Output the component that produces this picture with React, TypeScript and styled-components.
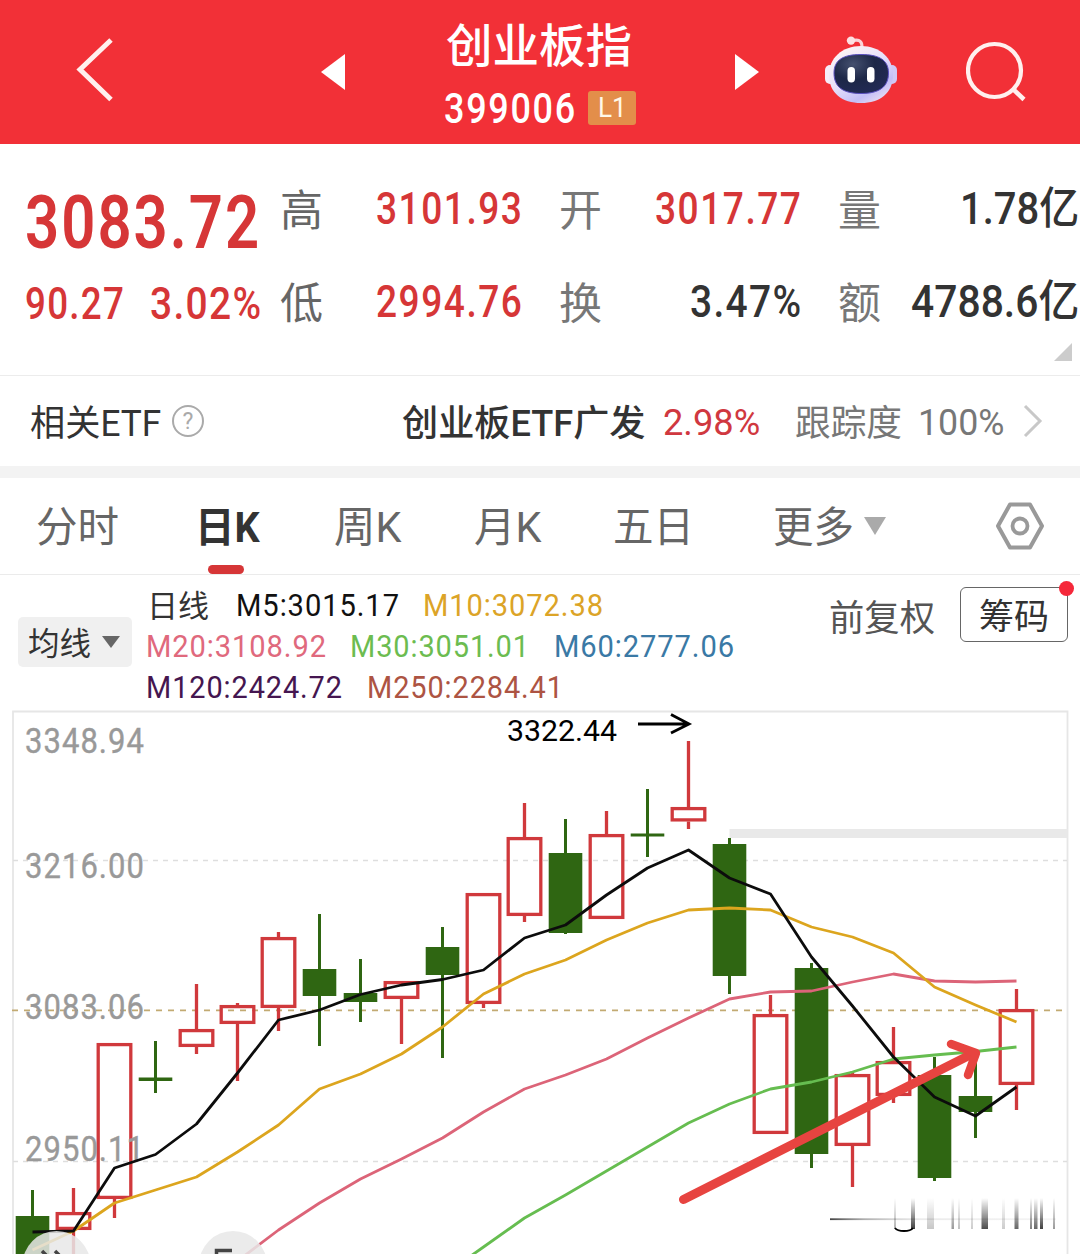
import React, { useLayoutEffect, useRef, useState } from 'react';
import styled, { createGlobalStyle } from 'styled-components';

const FONT = `Roboto, "Noto Sans CJK SC", sans-serif`;
const RED = '#d63637';
const GREEN = '#2f6612';

const Global = createGlobalStyle`
  * { box-sizing: border-box; }
  body { margin: 0; background: #fff; font-family: ${FONT}; }
`;

/* Text squeezed horizontally to a condensed width. */
const FitBox = styled.span<{ $w: number; $ml: number; $drop: number }>`
  display: block;
  flex: none;
  width: ${p => p.$w}px;
  margin-left: ${p => p.$ml}px;
  margin-top: ${p => p.$drop}px;
  white-space: nowrap;
`;
const FitText = styled.span<{ $size: number; $weight: number; $color: string; $ls: number }>`
  display: inline-block;
  vertical-align: top;
  transform-origin: 0 50%;
  font-size: ${p => p.$size}px;
  line-height: ${p => Math.round(p.$size * 1.2)}px;
  font-weight: ${p => p.$weight};
  letter-spacing: ${p => p.$ls}px;
  color: ${p => p.$color};
`;
type FitProps = { w: number; size: number; weight?: number; color?: string; ml?: number; drop?: number; ls?: number; children: string };
function Fit({ w, size, weight = 400, color = '#333', ml = 0, drop = 0, ls = 0, children }: FitProps) {
  const ref = useRef<HTMLSpanElement>(null);
  const [scale, setScale] = useState(1);
  useLayoutEffect(() => {
    if (ref.current) setScale(w / (ref.current.offsetWidth - ls));
  }, [w, ls, children]);
  return (
    <FitBox $w={w} $ml={ml} $drop={drop}>
      <FitText ref={ref} $size={size} $weight={weight} $color={color} $ls={ls} style={{ transform: `scaleX(${scale})` }}>
        {children}
      </FitText>
    </FitBox>
  );
}

const Page = styled.main`
  width: 1080px;
  height: 1254px;
  overflow: hidden;
  background: #fff;
  display: flex;
  flex-direction: column;
`;

const Header = styled.header`
  height: 144px;
  flex: none;
  background: #f23037;
  display: grid;
  grid-template-columns: 321px 123px 291px 90px 141px 114px;
`;
const HeaderCell = styled.div<{ $pl?: number; $pt?: number }>`
  padding-left: ${p => p.$pl ?? 0}px;
  padding-top: ${p => p.$pt ?? 0}px;
  svg { display: block; }
`;
const Title = styled.div`
  padding-top: 19px;
`;
const CodeRow = styled.div`
  display: flex;
  align-items: center;
  margin-top: 10px;
`;
const Badge = styled.span`
  width: 48px;
  height: 34px;
  margin: -2px 0 0 13px;
  border-radius: 3px;
  background: #e38e4a;
  display: flex;
  justify-content: center;
  align-items: center;
`;

const Quote = styled.section`
  height: 232px;
  flex: none;
  border-bottom: 1px solid #ececec;
  display: grid;
  grid-template-columns: 280px 279px 279px 242px;
  position: relative;
`;
const Price = styled.div`
  padding: 34px 0 0 25px;
`;
const Changes = styled.div`
  display: flex;
  gap: 26px;
  margin-top: 11px;
`;
const Stats = styled.dl<{ $right: number }>`
  margin: 0;
  padding: 39px ${p => p.$right}px 0 0;
  display: flex;
  flex-direction: column;
  gap: 41px;
`;
const Stat = styled.div`
  height: 52px;
  display: flex;
  align-items: center;
  justify-content: space-between;
`;
const Corner = styled.i`
  position: absolute;
  right: 8px;
  bottom: 14px;
  border-left: 18px solid transparent;
  border-bottom: 18px solid #ccc;
`;

const EtfRow = styled.section`
  height: 90px;
  flex: none;
  display: flex;
  align-items: center;
  padding: 4px 0 0 30px;
`;
const Help = styled.span`
  width: 32px;
  height: 32px;
  margin: -4px 0 0 11px;
  border: 2px solid #aaa;
  border-radius: 50%;
  color: #aaa;
  font-size: 23px;
  line-height: 29px;
  text-align: center;
`;
const Chevron = styled.svg`
  display: block;
  margin: -4px 0 0 19px;
`;
const Divider = styled.div`
  height: 12px;
  flex: none;
  background: #f3f3f3;
`;

const Tabs = styled.nav`
  height: 97px;
  flex: none;
  border-bottom: 1px solid #ebebeb;
  display: grid;
  grid-template-columns: 198px 137px 140px 140px 159px 222px 84px;
`;
const Tab = styled.div<{ $pl?: number }>`
  height: 96px;
  padding: 0 0 0 ${p => p.$pl ?? 0}px;
  display: flex;
  align-items: center;
  position: relative;
`;
const Underline = styled.i`
  position: absolute;
  left: 10px;
  bottom: 0;
  width: 36px;
  height: 9px;
  border-radius: 5px;
  background: ${RED};
`;
const Caret = styled.i<{ $w: number; $h: number; $c: string; $ml: number }>`
  border: ${p => p.$w / 2}px solid transparent;
  border-top: ${p => p.$h}px solid ${p => p.$c};
  border-bottom: 0;
  margin-left: ${p => p.$ml}px;
`;

const Legend = styled.section`
  height: 135px;
  flex: none;
  display: flex;
  align-items: flex-start;
`;
const MaSelect = styled.div`
  width: 114px;
  height: 50px;
  margin: 42px 15px 0 18px;
  padding: 0 0 0 10px;
  border-radius: 5px;
  background: #f0f0f0;
  display: flex;
  align-items: center;
`;
const MaLines = styled.div`
  width: 682px;
  padding-top: 9px;
`;
const MaLine = styled.div`
  height: 41px;
  display: flex;
  align-items: center;
`;
const Adjust = styled.div`
  padding-top: 23px;
  width: 131px;
`;
const ChipButton = styled.div`
  position: relative;
  width: 108px;
  height: 55px;
  margin-top: 12px;
  border: 1.5px solid #666;
  border-radius: 6px;
  display: flex;
  justify-content: center;
  align-items: center;
  padding-top: 7px;
`;
const Dot = styled.i`
  position: absolute;
  right: -7px;
  top: -7px;
  width: 15px;
  height: 15px;
  border-radius: 50%;
  background: #f5283a;
`;
const ChartSvg = styled.svg`
  display: block;
  flex: none;
  font-family: ${FONT};
`;

function Robot() {
  return (
    <svg width="72" height="68" viewBox="0 0 72 68">
      <defs>
        <linearGradient id="shell" x1="0.2" y1="0" x2="0.9" y2="1">
          <stop offset="0" stopColor="#fff5f4" />
          <stop offset="0.45" stopColor="#e6e0fa" />
          <stop offset="0.75" stopColor="#c3bef6" />
          <stop offset="1" stopColor="#f3e6f2" />
        </linearGradient>
        <radialGradient id="visor" cx="0.35" cy="0.25" r="0.8">
          <stop offset="0" stopColor="#45506f" />
          <stop offset="0.5" stopColor="#1d2747" />
          <stop offset="1" stopColor="#222a55" />
        </radialGradient>
      </defs>
      <path d="M26 5C33 3 37 4 37 11" fill="none" stroke="#fbd3d8" strokeWidth="3.2" />
      <circle cx="26" cy="4.6" r="4.2" fill="#fde0e2" />
      <rect x="0" y="29" width="10" height="19" rx="5" fill="#f6ecf8" />
      <rect x="62" y="29" width="10" height="19" rx="5" fill="#d0c9f6" />
      <path d="M36 10C55 10 68 22 68 39C68 57 55 67 36 67C17 67 4 57 4 39C4 22 17 10 36 10Z" fill="url(#shell)" />
      <path d="M36 18.5C54 18.5 63.500 24 63.500 37C63.500 51 54 57.500 36 57.500C18 57.500 9 51 9 37C9 24 18 18.500 36 18.500Z" fill="url(#visor)" stroke="#5a4fc0" strokeWidth="1" />
      <rect x="22.500" y="31" width="7.500" height="15.500" rx="3.700" fill="#fff" />
      <rect x="42" y="31" width="7.500" height="15.500" rx="3.700" fill="#fff" />
    </svg>
  );
}

type Candle = [number, number, number, number, boolean];
/* high, body top, body bottom, low, rising */
const CANDLES: Candle[] = [
  [1190, 1216, 1262, 1262, false],
  [1188, 1212, 1230, 1262, true],
  [1043, 1043, 1199, 1218, true],
  [1041, 1077.5, 1081, 1093, false],
  [984, 1029, 1047, 1054, true],
  [1003, 1005, 1024, 1081, true],
  [932, 937, 1008, 1031, true],
  [914, 969, 996, 1046, false],
  [959, 993, 1002, 1022, false],
  [981, 981, 999, 1044, true],
  [927, 947, 975, 1058, false],
  [893, 893, 1004, 1008, true],
  [803, 837, 916, 922, true],
  [819, 853, 933, 934, false],
  [811, 834, 919, 919, true],
  [789, 833.5, 836.5, 857, false],
  [741, 807, 821.5, 829, true],
  [838, 844, 976, 994, false],
  [995, 1014, 1134, 1134, true],
  [963, 968, 1154, 1168, false],
  [1071, 1074, 1146, 1187, true],
  [1027, 1061, 1096, 1103, true],
  [1057, 1075, 1178, 1181, false],
  [1056, 1096, 1112, 1138, false],
  [989, 1009, 1085, 1110, true],
];
const x = (i: number) => 32.5 + 41 * i;
const M5 = [1232, 1231, 1168, 1154.5, 1124, 1073, 1020, 1010, 994.5, 985, 979.5, 970, 938, 925, 895, 868, 850, 878, 894, 957, 1006, 1057, 1097, 1116, 1087];
const M10 = [1250, 1231, 1203, 1190, 1177, 1152, 1125, 1089, 1074, 1054, 1027, 994, 974, 960, 940, 923, 910, 908, 910, 927, 937, 953, 987, 1005, 1022];
const M20 = [1261, 1230, 1203, 1179, 1159, 1138, 1112, 1089, 1075, 1059, 1038, 1018, 999, 992, 991, 982, 974, 981, 982, 981];
const M30 = [1276, 1247, 1218, 1195, 1171, 1147, 1123, 1104, 1089, 1082, 1072, 1059, 1055, 1051.5, 1047];
const pts = (v: number[]) => v.map((y, i) => `${x(25 - v.length + i)},${y}`).join(' ');

/* x, width, opacity of the fading strokes in the corner mark */
const STREAKS = [
  [894, 2, 0.3], [911, 4, 0.75], [927, 7, 0.22], [951.5, 2.5, 0.4], [958, 2, 0.25], [971, 2, 0.2],
  [981.5, 6.5, 0.7], [1002, 3, 0.2], [1014.500, 4, 0.6], [1030, 2, 0.5], [1034, 3.5, 0.6], [1040, 3, 0.75], [1053, 2, 0.4],
];
const AXIS: [string, number][] = [['3348.94', 753], ['3216.00', 878], ['3083.06', 1019], ['2950.11', 1161]];

function Chart() {
  return (
    <ChartSvg width="1080" height="544" viewBox="0 710 1080 544">
      <defs>
        <linearGradient id="streak" x1="0" y1="0" x2="0" y2="1">
          <stop offset="0" stopColor="#000" stopOpacity="0" />
          <stop offset="1" stopColor="#000" />
        </linearGradient>
        <linearGradient id="dash" x1="0" y1="0" x2="1" y2="0">
          <stop offset="0" stopColor="#444" />
          <stop offset="0.15" stopColor="#999" stopOpacity="0.8" />
          <stop offset="0.4" stopColor="#ccc" stopOpacity="0.4" />
          <stop offset="1" stopColor="#ccc" stopOpacity="0.2" />
        </linearGradient>
      </defs>
      <path d="M13 1254V711.500H1067.500V1254" fill="none" stroke="#e6e6e6" strokeWidth="1.8" />
      <path d="M13 860.500H1067M13 1161.500H1067" stroke="#dedede" strokeWidth="1.3" strokeDasharray="5 5" />
      <path d="M12 1010.300H1067" stroke="#c2aa72" strokeWidth="1.8" strokeDasharray="6 6" />
      <rect x="729.500" y="829" width="338" height="9" fill="#e9e9e9" />
      {CANDLES.map(([h, t, b, l, up], i) =>
        up ? (
          <g key={i} stroke="#d0393c" strokeWidth="3.300" fill="none">
            <path d={`M${x(i)} ${h}V${t}M${x(i)} ${b}V${l}`} />
            <rect x={x(i) - 16.3} y={t + 1.6} width="32.600" height={b - t - 3.2} />
          </g>
        ) : (
          <g key={i} fill={GREEN}>
            <rect x={x(i) - 1.5} y={h} width="3" height={l - h} />
            <rect x={x(i) - 16.8} y={t} width="33.600" height={b - t} />
          </g>
        ),
      )}
      {AXIS.map(([label, y]) => (
        <text key={label} x="25" y={y} fontSize="35" fontWeight="400" letterSpacing="1.2" fill="#999" stroke="#999" strokeWidth="0.4" textLength="120" lengthAdjust="spacingAndGlyphs">
          {label}
        </text>
      ))}
      <g fill="none" strokeWidth="2.800" strokeLinejoin="round">
        <polyline points={pts(M30)} stroke="#66bd50" />
        <polyline points={pts(M20)} stroke="#dc6478" />
        <polyline points={pts(M10)} stroke="#dca51e" />
        <polyline points={pts(M5)} stroke="#0c0c0c" />
      </g>
      <text x="507" y="741" fontSize="30" fill="#000" textLength="110" lengthAdjust="spacingAndGlyphs">3322.44</text>
      <path d="M638 724H688M671 714.500L689 724L671 733" fill="none" stroke="#000" strokeWidth="2.800" />
      <g fill="none" stroke="#e74440" strokeLinecap="round" strokeLinejoin="round">
        <path d="M683.500 1199.500L972 1054" strokeWidth="9" />
        <path d="M951 1044L976 1053L968 1075" strokeWidth="8.500" />
      </g>
      <rect x="830" y="1218.300" width="226" height="1.800" fill="url(#dash)" />
      {STREAKS.map(([sx, w, o]) => (
        <rect key={sx} x={sx} y="1198" width={w} height="31" fill="url(#streak)" opacity={o} />
      ))}
      <path d="M895 1228C898 1232 910 1232 913 1228" fill="none" stroke="#000" strokeWidth="1.800" />
      <g fill="#e8e8e8" fillOpacity="0.85">
        <circle cx="56.500" cy="1265" r="34" />
        <circle cx="233" cy="1265" r="34" />
      </g>
      <path d="M42 1251L51 1260M55 1251L64 1260M216.500 1256V1250.500H232" fill="none" stroke="#444" strokeWidth="3.500" />
    </ChartSvg>
  );
}

export default function App() {
  return (
    <Page>
      <Global />
      <Header>
        <HeaderCell $pl={76} $pt={36}>
          <svg width="38" height="68" viewBox="0 0 38 68">
            <path d="M35 4L4 33.500L35 63.500" fill="none" stroke="#fff0ee" strokeWidth="5" />
          </svg>
        </HeaderCell>
        <HeaderCell $pt={54}>
          <svg width="24" height="36" viewBox="0 0 24 36"><path d="M0 18L24 0V36Z" fill="#fff" /></svg>
        </HeaderCell>
        <Title>
          <Fit w={186} size={46} weight={500} color="#fff" ml={2}>创业板指</Fit>
          <CodeRow>
            <Fit w={131} size={42} weight={500} color="#fff" ls={2}>399006</Fit>
            <Badge><Fit w={29} size={27} color="#fff8e8">L1</Fit></Badge>
          </CodeRow>
        </Title>
        <HeaderCell $pt={54}>
          <svg width="24" height="36" viewBox="0 0 24 36"><path d="M24 18L0 0V36Z" fill="#fff" /></svg>
        </HeaderCell>
        <HeaderCell $pt={36}><Robot /></HeaderCell>
        <HeaderCell $pt={41}>
          <svg width="62" height="62" viewBox="0 0 62 62">
            <circle cx="28.500" cy="29.500" r="26.500" fill="none" stroke="#fff0ee" strokeWidth="4.200" />
            <path d="M47 48L58 58.500" stroke="#fff0ee" strokeWidth="4.500" />
          </svg>
        </HeaderCell>
      </Header>

      <Quote>
        <Price>
          <Fit w={234} size={74} weight={600} color={RED} ls={2.5}>3083.72</Fit>
          <Changes>
            <Fit w={99} size={44} weight={500} color={RED} ls={1.5}>90.27</Fit>
            <Fit w={111} size={44} weight={500} color={RED} ls={1.5}>3.02%</Fit>
          </Changes>
        </Price>
        <Stats $right={37}>
          <Stat><Fit w={43} size={43} color="#666" drop={3}>高</Fit><Fit w={146} size={44} weight={500} color={RED} ls={1.8}>3101.93</Fit></Stat>
          <Stat><Fit w={43} size={43} color="#666" drop={3}>低</Fit><Fit w={146} size={44} weight={500} color={RED} ls={1.8}>2994.76</Fit></Stat>
        </Stats>
        <Stats $right={37}>
          <Stat><Fit w={43} size={43} color="#777" drop={3}>开</Fit><Fit w={146} size={44} weight={500} color={RED} ls={1.8}>3017.77</Fit></Stat>
          <Stat><Fit w={43} size={43} color="#777" drop={3}>换</Fit><Fit w={111} size={44} weight={500} ls={1.5}>3.47%</Fit></Stat>
        </Stats>
        <Stats $right={1}>
          <Stat><Fit w={43} size={43} color="#777" drop={3}>量</Fit><Fit w={119} size={44} weight={500}>1.78亿</Fit></Stat>
          <Stat><Fit w={43} size={43} color="#777" drop={3}>额</Fit><Fit w={168} size={44} weight={500}>4788.6亿</Fit></Stat>
        </Stats>
        <Corner />
      </Quote>

      <EtfRow>
        <Fit w={131} size={36} drop={2}>相关ETF</Fit>
        <Help>?</Help>
        <Fit w={243} size={36} weight={500} ml={198} drop={2}>创业板ETF广发</Fit>
        <Fit w={97} size={37} color="#d0383f" ml={18}>2.98%</Fit>
        <Fit w={107} size={36} color="#777" ml={35} drop={3}>跟踪度</Fit>
        <Fit w={86} size={37} color="#777" ml={16}>100%</Fit>
        <Chevron width="20" height="34" viewBox="0 0 20 34">
          <path d="M2 2L17 17L2 32" fill="none" stroke="#c8c8c8" strokeWidth="3" />
        </Chevron>
      </EtfRow>
      <Divider />

      <Tabs>
        <Tab $pl={36}><Fit w={83} size={42} color="#666" drop={4}>分时</Fit></Tab>
        <Tab><Fit w={65} size={42} weight={700} ml={-3} drop={4}>日K</Fit><Underline /></Tab>
        <Tab><Fit w={67} size={42} color="#666" ml={-1} drop={4}>周K</Fit></Tab>
        <Tab><Fit w={67} size={42} color="#666" ml={-1} drop={4}>月K</Fit></Tab>
        <Tab><Fit w={81} size={42} color="#666" ml={-2} drop={4}>五日</Fit></Tab>
        <Tab><Fit w={81} size={42} color="#666" ml={-1} drop={4}>更多</Fit><Caret $w={22} $h={18} $c="#aaa" $ml={10} /></Tab>
        <Tab>
          <svg width="48" height="48" viewBox="0 0 48 48">
            <path d="M14 2.500H34L46 24L34 45.500H14L2 24Z" fill="none" stroke="#999" strokeWidth="4" strokeLinejoin="round" />
            <circle cx="24" cy="24" r="7.500" fill="none" stroke="#999" strokeWidth="3.800" />
          </svg>
        </Tab>
      </Tabs>

      <Legend>
        <MaSelect><Fit w={63} size={32} drop={4}>均线</Fit><Caret $w={18} $h={12} $c="#666" $ml={11} /></MaSelect>
        <MaLines>
          <MaLine>
            <Fit w={62} size={31} drop={3}>日线</Fit>
            <Fit w={163} size={32} weight={450} color="#111" ml={27} ls={1}>M5:3015.17</Fit>
            <Fit w={180} size={32} weight={450} color="#dca427" ml={24} ls={1}>M10:3072.38</Fit>
          </MaLine>
          <MaLine>
            <Fit w={180} size={32} weight={450} color="#e0697d" ml={-1} ls={1}>M20:3108.92</Fit>
            <Fit w={179} size={32} weight={450} color="#6cbc50" ml={24} ls={1}>M30:3051.01</Fit>
            <Fit w={180} size={32} weight={450} color="#3a79a5" ml={25} ls={1}>M60:2777.06</Fit>
          </MaLine>
          <MaLine>
            <Fit w={196} size={32} weight={450} color="#451650" ml={-1} ls={1}>M120:2424.72</Fit>
            <Fit w={196} size={32} weight={450} color="#ad5443" ml={25} ls={1}>M250:2284.41</Fit>
          </MaLine>
        </MaLines>
        <Adjust><Fit w={106} size={36} color="#555">前复权</Fit></Adjust>
        <ChipButton><Fit w={70} size={35}>筹码</Fit><Dot /></ChipButton>
      </Legend>
      <Chart />
    </Page>
  );
}
